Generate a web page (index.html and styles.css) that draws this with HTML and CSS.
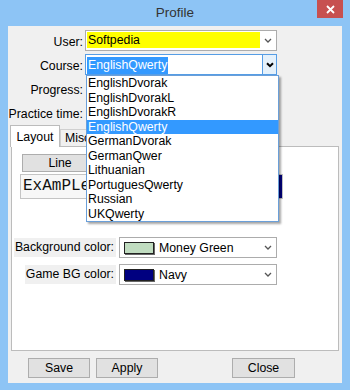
FILE: index.html
```html
<!DOCTYPE html>
<html lang="en">
<head>
    <meta charset="UTF-8">
    <title>Profile</title>
    <link rel="stylesheet" href="styles.css">
</head>
<body>
    <div class="window">
        <div class="titlebar">
            <span class="title">Profile</span>
            <div class="close">
                <svg width="9" height="9" viewBox="0 0 9 9"><path d="M1 1 L8 8 M8 1 L1 8" stroke="#fff" stroke-width="1.8"/></svg>
            </div>
        </div>

        <div class="client">
            <div class="form">
                <label>User:</label>
                <div class="combo">
                    <div class="field user-field">Softpedia</div>
                    <div class="arrow">
                        <svg width="8" height="5" viewBox="0 0 8 5"><path d="M1 1 L4 4 L7 1" stroke="#555" stroke-width="1.3" fill="none"/></svg>
                    </div>
                </div>

                <label>Course:</label>
                <div class="combo focused">
                    <div class="field"><span class="selected">EnglishQwerty</span></div>
                    <div class="arrow arrow-btn">
                        <svg width="8" height="6" viewBox="0 0 8 6"><path d="M1 1.2 L4 4.2 L7 1.2" stroke="#000" stroke-width="2" fill="none"/></svg>
                    </div>
                </div>

                <label>Progress:</label>
                <div></div>

                <label>Practice time:</label>
                <div></div>
            </div>

            <div class="tabs">
                <div class="tab active">Layout</div>
                <div class="tab">Misc</div>
            </div>

            <div class="panel">
                <div class="btn line-btn">Line</div>
                <div class="example">
                    <span class="example-text">ExAmPLe</span>
                    <span class="example-bg"></span>
                </div>

                <div class="colors">
                    <div class="color-label"><span>Background color:</span></div>
                    <div class="combo">
                        <div class="field color-field">
                            <span class="swatch money-green"></span>Money Green
                        </div>
                        <div class="arrow">
                            <svg width="8" height="5" viewBox="0 0 8 5"><path d="M1 1 L4 4 L7 1" stroke="#555" stroke-width="1.3" fill="none"/></svg>
                        </div>
                    </div>

                    <div class="color-label"><span>Game BG color:</span></div>
                    <div class="combo">
                        <div class="field color-field">
                            <span class="swatch navy"></span>Navy
                        </div>
                        <div class="arrow">
                            <svg width="8" height="5" viewBox="0 0 8 5"><path d="M1 1 L4 4 L7 1" stroke="#555" stroke-width="1.3" fill="none"/></svg>
                        </div>
                    </div>
                </div>
            </div>

            <div class="actions">
                <div class="btn action-btn">Save</div>
                <div class="btn action-btn">Apply</div>
                <div class="btn action-btn close-btn">Close</div>
            </div>

            <ul class="dropdown">
                <li>EnglishDvorak</li>
                <li>EnglishDvorakL</li>
                <li>EnglishDvorakR</li>
                <li class="hover">EnglishQwerty</li>
                <li>GermanDvorak</li>
                <li>GermanQwer</li>
                <li>Lithuanian</li>
                <li>PortuguesQwerty</li>
                <li>Russian</li>
                <li>UKQwerty</li>
            </ul>
        </div>
    </div>
</body>
</html>
```

FILE: styles.css
```css
body {
    margin: 0;
    padding: 0;
    font-family: 'Liberation Sans', Arial, sans-serif;
    font-size: 12.3px;
    color: #000;
}
.window {
    width: 350px;
    height: 390px;
    background: #8dc4f5;
    padding: 0 8px 7px 8px;
    box-sizing: border-box;
    overflow: hidden;
}
.titlebar {
    height: 26px;
    display: grid;
    grid-template-columns: 1fr auto 1fr;
    margin: 0 -8px;
}
.title {
    grid-column: 2;
    align-self: center;
    font-size: 13.5px;
    color: #333;
    padding-bottom: 1px;
}
.close {
    grid-column: 3;
    justify-self: end;
    align-self: start;
    width: 26px;
    height: 18px;
    margin-right: 7px;
    background: #c75050;
    display: flex;
    align-items: center;
    justify-content: center;
}
.client {
    position: relative;
    height: 357px;
    background: #f0f0f0;
    padding-top: 4px;
    box-sizing: border-box;
}
.form {
    display: grid;
    grid-template-columns: 77px 192px;
    grid-auto-rows: 22px;
    row-gap: 2px;
}
.form label {
    text-align: right;
    padding-right: 2px;
    align-self: center;
    padding-top: 2px;
    white-space: nowrap;
}
.combo {
    height: 21px;
    box-sizing: border-box;
    border: 1px solid #acacac;
    background: #fff;
    display: flex;
}
.combo.focused {
    border-color: #569de5;
}
.field {
    flex: 1;
    display: flex;
    align-items: center;
    white-space: nowrap;
}
.user-field {
    background: #ffff00;
    margin: 1px 0 2px 1px;
    padding-left: 1px;
}
.selected {
    background: #3399ff;
    color: #fff;
    margin: 1px 0 0 1px;
    padding: 1px;
    line-height: 15px;
}
.arrow {
    width: 16px;
    display: flex;
    align-items: center;
    justify-content: center;
}
.arrow-btn {
    width: 13px;
    background: #e5f1fb;
    border-left: 1px solid #569de5;
}
.tabs {
    display: flex;
    align-items: flex-end;
    height: 21px;
    margin: 1px 0 0 2px;
    position: relative;
    z-index: 1;
}
.tab {
    width: 40px;
    height: 17px;
    box-sizing: border-box;
    border: 1px solid #d0d0d0;
    border-bottom: none;
    background: #f0f0f0;
    padding: 1px 0 0 4px;
}
.tab.active {
    width: 50px;
    height: 22px;
    margin-bottom: -1px;
    background: #fff;
    border-color: #bcbcbc;
    text-align: center;
    padding: 4px 0 0 0;
}
.panel {
    height: 205px;
    margin: 0 3px;
    box-sizing: border-box;
    border: 1px solid #bcbcbc;
    background: #fff;
    padding: 7px 0 0 3px;
}
.btn {
    box-sizing: border-box;
    border: 1px solid #adadad;
    background: #e1e1e1;
    display: flex;
    align-items: center;
    justify-content: center;
}
.line-btn {
    width: 76px;
    height: 18px;
    margin-left: 7px;
}
.example {
    width: 263px;
    height: 25px;
    margin: 2px 0 0 5px;
    box-sizing: border-box;
    border: 1px solid #c4c4c4;
    background: #f7f7f7;
    display: flex;
    justify-content: space-between;
}
.example-text {
    font-family: 'Liberation Mono', 'Courier New', monospace;
    font-size: 16px;
    line-height: 23px;
    padding-left: 2px;
    color: #111;
}
.example-bg {
    width: 60px;
    background: #000080;
}
.colors {
    display: grid;
    grid-template-columns: 101px 158px;
    grid-auto-rows: 21px;
    column-gap: 3px;
    row-gap: 6px;
    margin-top: 38px;
}
.color-label {
    display: flex;
    justify-content: flex-end;
    align-items: center;
    white-space: nowrap;
}
.color-label span {
    background: #f0f0f0;
    padding: 2px 2px 2px 1px;
    line-height: 15px;
}
.color-field {
    padding-left: 4px;
}
.swatch {
    width: 30px;
    height: 12px;
    box-sizing: border-box;
    border: 1px solid #222;
    box-shadow: 1px 1px 0 #666;
    margin-right: 5px;
}
.money-green {
    background: #c0dcc0;
}
.navy {
    background: #000080;
}
.actions {
    display: flex;
    gap: 6px;
    margin: 7px 0 0 20px;
}
.action-btn {
    width: 62px;
    height: 20px;
}
.close-btn {
    margin-left: 68px;
    width: 63px;
}
.dropdown {
    position: absolute;
    left: 78px;
    top: 49px;
    width: 191px;
    margin: 0;
    padding: 0;
    list-style: none;
    background: #fff;
    border: 1px solid #6a9fd9;
    box-shadow: 2px 2px 2px rgba(0, 0, 0, 0.35);
    z-index: 2;
}
.dropdown li {
    height: 14.5px;
    line-height: 14.5px;
    padding-left: 1px;
}
.dropdown li.hover {
    background: #3399ff;
    color: #fff;
}
```
